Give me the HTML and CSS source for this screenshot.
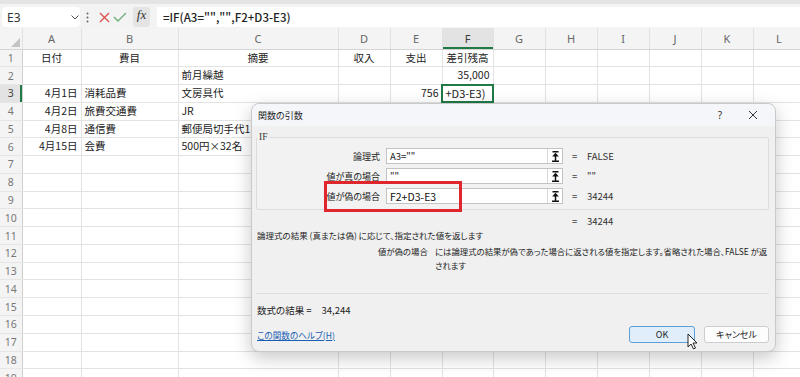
FILE: index.html
```html
<!DOCTYPE html>
<html lang="ja">
<head>
<meta charset="utf-8">
<title>関数の引数</title>
<link rel="stylesheet" href="styles.css">
</head>
<body>
<div class="app">
  <div class="topbar">
    <div class="namebox"><span>E3</span>
      <svg class="chev" width="8" height="5" viewBox="0 0 8 5"><polyline points="0.5,0.5 4,4 7.5,0.5" fill="none" stroke="#555" stroke-width="1"/></svg>
    </div>
    <svg class="kebab" width="3" height="11" viewBox="0 0 3 11"><circle cx="1.5" cy="1.5" r="1" fill="#666"/><circle cx="1.5" cy="5.5" r="1" fill="#666"/><circle cx="1.5" cy="9.5" r="1" fill="#666"/></svg>
    <svg class="xicon" width="11" height="11" viewBox="0 0 11 11"><path d="M1 1L10 10M10 1L1 10" stroke="#d9534f" stroke-width="1.4" fill="none"/></svg>
    <svg class="check" width="14" height="10" viewBox="0 0 14 10"><polyline points="1,5 5,9 13,1" fill="none" stroke="#6fb07a" stroke-width="1.4"/></svg>
    <div class="fx">fx</div>
    <div class="formula">=IF(A3="","",F2+D3-E3)</div>
  </div>

  <table class="sheet">
    <colgroup>
      <col class="c-rh"><col class="c-a"><col class="c-b"><col class="c-c"><col class="c-d"><col class="c-e"><col class="c-f"><col class="c-n"><col class="c-n"><col class="c-n"><col class="c-n"><col class="c-n"><col class="c-n">
    </colgroup>
    <thead>
      <tr><th class="corner"><svg width="9" height="9" viewBox="0 0 9 9"><polygon points="9,0 9,9 0,9" fill="#c4c4c4"/></svg></th><th>A</th><th>B</th><th>C</th><th>D</th><th>E</th><th class="selcol">F</th><th>G</th><th>H</th><th>I</th><th>J</th><th>K</th><th>L</th></tr>
    </thead>
    <tbody>
      <tr><th>1</th><td class="ctr">日付</td><td class="ctr">費目</td><td class="ctr">摘要</td><td class="ctr">収入</td><td class="ctr">支出</td><td class="ctr">差引残高</td><td></td><td></td><td></td><td></td><td></td><td></td></tr>
      <tr><th>2</th><td></td><td></td><td>前月繰越</td><td></td><td></td><td class="num">35,000</td><td></td><td></td><td></td><td></td><td></td><td></td></tr>
      <tr><th class="selrow">3</th><td class="num">4月1日</td><td>消耗品費</td><td>文房具代</td><td></td><td class="num">756</td><td class="active">+D3-E3)</td><td></td><td></td><td></td><td></td><td></td><td></td></tr>
      <tr><th>4</th><td class="num">4月2日</td><td>旅費交通費</td><td>JR</td><td></td><td></td><td></td><td></td><td></td><td></td><td></td><td></td><td></td></tr>
      <tr><th>5</th><td class="num">4月8日</td><td>通信費</td><td>郵便局切手代1</td><td></td><td></td><td></td><td></td><td></td><td></td><td></td><td></td><td></td></tr>
      <tr><th>6</th><td class="num">4月15日</td><td>会費</td><td>500円×32名</td><td></td><td></td><td></td><td></td><td></td><td></td><td></td><td></td><td></td></tr>
      <tr><th>7</th><td></td><td></td><td></td><td></td><td></td><td></td><td></td><td></td><td></td><td></td><td></td><td></td></tr>
      <tr><th>8</th><td></td><td></td><td></td><td></td><td></td><td></td><td></td><td></td><td></td><td></td><td></td><td></td></tr>
      <tr><th>9</th><td></td><td></td><td></td><td></td><td></td><td></td><td></td><td></td><td></td><td></td><td></td><td></td></tr>
      <tr><th>10</th><td></td><td></td><td></td><td></td><td></td><td></td><td></td><td></td><td></td><td></td><td></td><td></td></tr>
      <tr><th>11</th><td></td><td></td><td></td><td></td><td></td><td></td><td></td><td></td><td></td><td></td><td></td><td></td></tr>
      <tr><th>12</th><td></td><td></td><td></td><td></td><td></td><td></td><td></td><td></td><td></td><td></td><td></td><td></td></tr>
      <tr><th>13</th><td></td><td></td><td></td><td></td><td></td><td></td><td></td><td></td><td></td><td></td><td></td><td></td></tr>
      <tr><th>14</th><td></td><td></td><td></td><td></td><td></td><td></td><td></td><td></td><td></td><td></td><td></td><td></td></tr>
      <tr><th>15</th><td></td><td></td><td></td><td></td><td></td><td></td><td></td><td></td><td></td><td></td><td></td><td></td></tr>
      <tr><th>16</th><td></td><td></td><td></td><td></td><td></td><td></td><td></td><td></td><td></td><td></td><td></td><td></td></tr>
      <tr><th>17</th><td></td><td></td><td></td><td></td><td></td><td></td><td></td><td></td><td></td><td></td><td></td><td></td></tr>
      <tr><th>18</th><td></td><td></td><td></td><td></td><td></td><td></td><td></td><td></td><td></td><td></td><td></td><td></td></tr>
      <tr><th>19</th><td></td><td></td><td></td><td></td><td></td><td></td><td></td><td></td><td></td><td></td><td></td><td></td></tr>
    </tbody>
  </table>

  <div class="dialog">
    <div class="titlebar">
      <span class="title">関数の引数</span>
      <span class="help">?</span>
      <svg class="close" width="10" height="10" viewBox="0 0 10 10"><path d="M1 1L9 9M9 1L1 9" stroke="#333" stroke-width="1" fill="none"/></svg>
    </div>
    <div class="dbody">
      <fieldset class="group">
        <legend>IF</legend>
        <div class="args">
          <div class="arg">
            <span class="alabel">論理式</span>
            <span class="ainput"><span class="aval">A3=""</span><span class="refbtn"><svg width="9" height="11" viewBox="0 0 9 11"><path d="M1.5 0.8H7.5M1 10.2H8M4.5 5V10" stroke="#111" stroke-width="1.5" fill="none"/><polygon points="4.5,1.8 1.2,5.6 7.8,5.6" fill="#111"/></svg></span></span>
            <span class="eq">=</span><span class="res">FALSE</span>
          </div>
          <div class="arg">
            <span class="alabel">値が真の場合</span>
            <span class="ainput"><span class="aval">""</span><span class="refbtn"><svg width="9" height="11" viewBox="0 0 9 11"><path d="M1.5 0.8H7.5M1 10.2H8M4.5 5V10" stroke="#111" stroke-width="1.5" fill="none"/><polygon points="4.5,1.8 1.2,5.6 7.8,5.6" fill="#111"/></svg></span></span>
            <span class="eq">=</span><span class="res">""</span>
          </div>
          <div class="arg">
            <span class="alabel">値が偽の場合</span>
            <span class="ainput"><span class="aval strong">F2+D3-E3</span><span class="refbtn"><svg width="9" height="11" viewBox="0 0 9 11"><path d="M1.5 0.8H7.5M1 10.2H8M4.5 5V10" stroke="#111" stroke-width="1.5" fill="none"/><polygon points="4.5,1.8 1.2,5.6 7.8,5.6" fill="#111"/></svg></span></span>
            <span class="eq">=</span><span class="res">34244</span>
          </div>
        </div>
      </fieldset>
      <div class="total"><span class="eq">=</span><span class="res">34244</span></div>
      <p class="desc">論理式の結果 (真または偽) に応じて、指定された値を返します</p>
      <div class="argdesc">
        <span class="adname">値が偽の場合</span>
        <span class="adtext">には論理式の結果が偽であった場合に返される値を指定します。省略された場合、FALSE が返<br>されます</span>
      </div>
      <div class="result">数式の結果 =<span class="rval">34,244</span></div>
      <div class="footer">
        <a class="helplink">この関数のヘルプ(H)</a>
        <div class="btns">
          <button class="btn ok">OK</button>
          <button class="btn cancel">キャンセル</button>
        </div>
      </div>
    </div>
    <div class="redbox"></div>
    <svg class="cursor" width="11" height="17" viewBox="0 0 11 17"><path d="M1 1V14L4 11L6.5 16L8.5 15L6 10H10Z" fill="#fff" stroke="#222" stroke-width="1" stroke-linejoin="round"/></svg>
  </div>
</div>
</body>
</html>
```
FILE: styles.css
```css
html, body {
  margin: 0;
  padding: 0;
}
body {
  width: 800px;
  height: 377px;
  overflow: hidden;
  background: #fff;
}
.app {
  position: relative;
  width: 800px;
  height: 377px;
  overflow: hidden;
  font-family: "Noto Sans CJK JP", "Noto Sans", sans-serif;
}

/* formula bar */
.topbar {
  display: flex;
  align-items: center;
  height: 28px;
  box-sizing: border-box;
  padding: 7px 0 1px 2px;
  background: linear-gradient(#e4e4e4 0, #e4e4e4 4px, #f3f3f3 4px);
}
.namebox {
  width: 78px;
  height: 20px;
  box-sizing: border-box;
  padding: 0 1px 0 5px;
  display: flex;
  align-items: center;
  justify-content: space-between;
  background: #fff;
  border-radius: 4px;
  font: 12px "Noto Sans", sans-serif;
  color: #333;
}
.kebab { margin-left: 6px; }
.xicon { margin-left: 10px; }
.check { margin-left: 3px; }
.fx {
  margin-left: 6px;
  width: 17px;
  height: 20px;
  line-height: 19px;
  text-align: center;
  background: #e4e4e4;
  border-radius: 3px;
  font: italic 13px "Liberation Serif", serif;
  color: #333;
}
.formula {
  margin-left: 7px;
  flex: 1;
  height: 20px;
  line-height: 20px;
  padding-left: 6px;
  background: #fff;
  font-size: 11.5px;
  font-weight: 500;
  color: #222;
}

/* sheet */
.sheet {
  border-collapse: collapse;
  table-layout: fixed;
  width: 805px;
  font-size: 10.5px;
  color: #222;
}
.c-rh { width: 22px; }
.c-a { width: 59px; }
.c-b { width: 97px; }
.c-c { width: 160px; }
.c-d { width: 52px; }
.c-e { width: 52px; }
.c-f { width: 51px; }
.c-n { width: 52px; }
.sheet thead tr { height: 21px; }
.sheet thead th {
  padding: 0;
  background: #f4f4f4;
  color: #666;
  font: 11px "Noto Sans", sans-serif;
  border-right: 1px solid #e2e2e2;
  border-bottom: 1px solid #d4d4d4;
}
.sheet thead th.corner {
  text-align: right;
  vertical-align: bottom;
  padding: 0 2px 2px 0;
  line-height: 0;
}
.sheet thead th.selcol {
  background: #e3e3e3;
  color: #3b3b3b;
  box-shadow: inset 0 -2px 0 #1f7a46;
}
.sheet tbody tr { height: 17.78px; }
.sheet tbody th {
  padding: 0;
  background: #f4f4f4;
  color: #777;
  font: 10.5px "Noto Sans", sans-serif;
  text-align: center;
  border-right: 1px solid #cfcfcf;
  border-bottom: 1px solid #e6e6e6;
}
.sheet tbody th.selrow {
  background: #e3e3e3;
  color: #444;
  box-shadow: inset -2px 0 0 #1f7a46;
}
.sheet td {
  padding: 0 3px;
  border: 1px solid #e3e3e3;
  white-space: nowrap;
  overflow: hidden;
  line-height: 1;
}
.sheet td.ctr { text-align: center; }
.sheet td.num { text-align: right; }
.sheet td.active {
  outline: 2px solid #1f7a46;
  outline-offset: -1px;
  font-size: 11px;
}

/* dialog */
.dialog {
  position: absolute;
  left: 251px;
  top: 103px;
  width: 525px;
  height: 249px;
  box-sizing: border-box;
  background: #f0f0f0;
  border: 1px solid #c9c9c9;
  border-radius: 8px;
  box-shadow: 0 6px 18px rgba(0, 0, 0, 0.22);
  color: #222;
  font-size: 9.5px;
  font-feature-settings: "palt";
}
.titlebar {
  display: flex;
  align-items: center;
  height: 22px;
  padding: 0 6px;
  background: #f4f6fa;
  border-radius: 8px 8px 0 0;
}
.title { flex: 1; font-size: 9px; }
.help {
  margin-right: 26px;
  font: 10px "Noto Sans", sans-serif;
  color: #333;
}
.close { margin-right: 11px; }
.dbody {
  padding: 0 6px 0 4px;
}
.group {
  margin: 5px 0 0;
  padding: 5px 0 5px 0;
  height: 79px;
  box-sizing: border-box;
  border: 1px solid #dcdcdc;
  border-radius: 2px;
  background: #f2f2f2;
}
.group legend {
  padding: 0 2px;
  margin-left: 0;
  font: 9.5px "Liberation Serif", serif;
  line-height: 12px;
  color: #333;
}
.args {
  display: flex;
  flex-direction: column;
  gap: 4px;
  margin-top: 0;
}
.arg {
  display: flex;
  align-items: center;
  height: 16px;
}
.alabel {
  width: 129px;
  flex-shrink: 0;
  padding-right: 6px;
  box-sizing: border-box;
  text-align: right;
  white-space: nowrap;
  font-size: 9px;
}
.ainput {
  width: 177px;
  height: 16px;
  flex-shrink: 0;
  box-sizing: border-box;
  display: flex;
  align-items: center;
  justify-content: space-between;
  background: #fff;
  border: 1px solid #c3c3c3;
}
.aval {
  padding-left: 3px;
  font-size: 9.5px;
}
.strong { font-size: 10.5px; color: #111; }
.refbtn {
  width: 14px;
  height: 14px;
  display: flex;
  align-items: center;
  justify-content: center;
  border-left: 1px solid #d8d8d8;
  background: #fff;
}
.eq {
  width: 15px;
  margin-left: 9px;
  color: #444;
}
.res { color: #333; }
.total {
  display: flex;
  height: 14px;
  line-height: 14px;
  padding-left: 316px;
  margin-top: 4px;
}
.total .eq { margin-left: 0; }
.desc {
  margin: 0;
  height: 14px;
  line-height: 14px;
  padding-left: 1px;
  font-size: 8.5px;
}
.argdesc {
  display: flex;
  margin-top: 2px;
  padding-left: 122px;
  font-size: 8.4px;
  line-height: 14px;
}
.adname { width: 57px; flex-shrink: 0; white-space: nowrap; }
.adtext { white-space: nowrap; }
.result {
  margin-top: 21px;
  border-top: 1px solid #dedede;
  padding: 9px 0 0 1px;
  height: 14px;
  line-height: 14px;
  font-size: 9.5px;
}
.rval { margin-left: 10px; }
.footer {
  display: flex;
  align-items: center;
  justify-content: space-between;
  margin-top: 9px;
  padding-left: 1px;
}
.helplink {
  color: #1a5fb4;
  text-decoration: underline;
  font-size: 8.6px;
}
.btns {
  display: flex;
  gap: 9px;
}
.btn {
  height: 17px;
  padding: 0;
  border-radius: 3px;
  font-family: "Noto Sans CJK JP", "Noto Sans", sans-serif;
  font-size: 9px;
  font-feature-settings: "palt";
  color: #222;
}
.ok {
  width: 66px;
  background: #dfeefa;
  border: 1px solid #5e9fd8;
}
.cancel {
  width: 65px;
  background: #fdfdfd;
  border: 1px solid #cdcdcd;
}
.redbox {
  position: absolute;
  left: 72px;
  top: 77px;
  width: 138px;
  height: 31px;
  box-sizing: border-box;
  border: 3px solid #e0262d;
}
.cursor {
  position: absolute;
  left: 435px;
  top: 229px;
}
```
